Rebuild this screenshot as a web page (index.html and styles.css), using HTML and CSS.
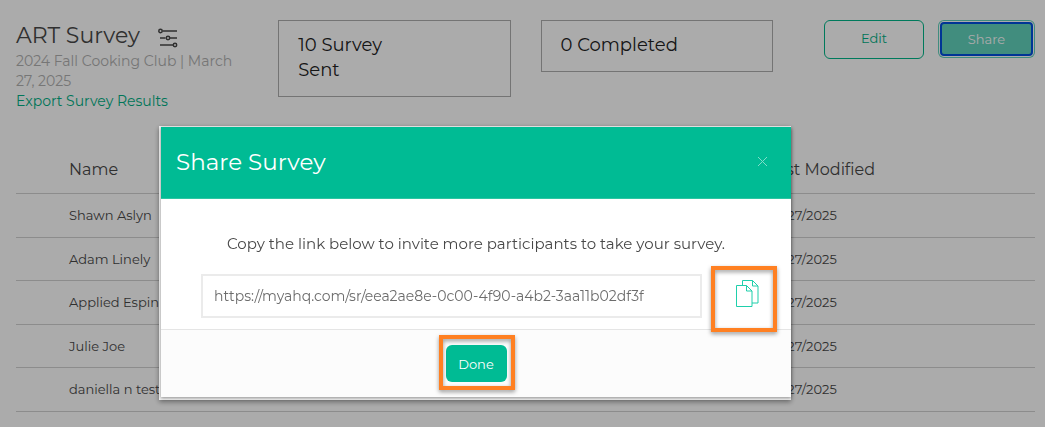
FILE: index.html
```html
<!DOCTYPE html>
<html lang="en">
<head>
    <meta charset="utf-8">
    <meta name="viewport" content="width=device-width, initial-scale=1">
    <title>ART Survey</title>
    <link rel="stylesheet" href="styles.css">
</head>
<body>
    <main class="page">
        <div class="survey-head">
            <div class="survey-info">
                <h1>ART Survey
                    <svg class="icon-sliders" width="20" height="20" viewBox="0 0 20 20" fill="none" stroke="currentColor" stroke-width="1.500">
                        <path d="M4.500 3H19M2 10h5.500M12 10h7M2 17h13"/>
                        <circle cx="2.500" cy="3" r="1.700"/>
                        <circle cx="10" cy="10" r="1.700"/>
                        <circle cx="17" cy="17" r="1.700"/>
                    </svg>
                </h1>
                <p class="survey-meta">2024 Fall Cooking Club | March 27, 2025</p>
                <a href="#" class="export">Export Survey Results</a>
            </div>
            <div class="stat">10 Survey<br>Sent</div>
            <div class="stat">0 Completed</div>
            <div class="actions">
                <button type="button" class="btn btn-outline">Edit</button>
                <button type="button" class="btn btn-share">Share</button>
            </div>
        </div>

        <table class="people">
            <thead>
                <tr><th>Name</th><th>Last Modified</th></tr>
            </thead>
            <tbody>
                <tr><td>Shawn Aslyn</td><td>03/27/2025</td></tr>
                <tr><td>Adam Linely</td><td>03/27/2025</td></tr>
                <tr><td>Applied Espinoza</td><td>03/27/2025</td></tr>
                <tr><td>Julie Joe</td><td>03/27/2025</td></tr>
                <tr><td>daniella n test</td><td>03/27/2025</td></tr>
            </tbody>
        </table>
    </main>

    <div class="overlay">
        <div class="frame">
            <div class="modal" role="dialog" aria-labelledby="modal-title">
                <div class="modal-header">
                    <h2 id="modal-title">Share Survey</h2>
                    <button type="button" class="close" aria-label="Close">
                        <svg width="11" height="11" viewBox="0 0 11 11" fill="none" stroke="currentColor"><path d="M1 1l9 9M10 1l-9 9"/></svg>
                    </button>
                </div>
                <div class="modal-body">
                    <label for="link">Copy the link below to invite more participants to take your survey.</label>
                    <div class="link-row">
                        <input type="text" id="link" value="https://myahq.com/sr/eea2ae8e-0c00-4f90-a4b2-3aa11b02df3f" readonly>
                        <button type="button" class="copy marked" aria-label="Copy link">
                            <svg width="23" height="27" viewBox="0 0 23 27" fill="none" stroke="currentColor">
                                <path d="M6.5 5V.5h10l5.5 5.500v17h-6M16.500.5V6H22"/>
                                <path d="M.5 5.500h10l5.500 5.500v15.500H.5zM10.500 5.500V11H16"/>
                            </svg>
                        </button>
                    </div>
                </div>
                <div class="modal-footer">
                    <button type="button" class="btn-done marked">Done</button>
                </div>
            </div>
        </div>
    </div>
</body>
</html>
```

FILE: styles.css
```css
* { margin: 0; padding: 0; box-sizing: border-box; }
body { font-family: Montserrat, Inter, sans-serif; font-size: 14px; color: #484848; background: #fff; }
button, input { font-family: inherit; }
button { cursor: pointer; }

.page { padding: 20px 10px 0 16px; }
.survey-head { display: grid; grid-template-columns: repeat(4, 1fr); column-gap: 30px; align-items: start; height: 124px; }
h1 { display: flex; align-items: center; gap: 18px; font-size: 22px; font-weight: 400; line-height: 31px; }
.icon-sliders { margin-top: 4px; }
.survey-meta { color: #b0b0b0; line-height: 20px; }
.export { display: block; color: #00b085; line-height: 20px; text-decoration: none; }
.stat { padding: 12px 19px 13px; border: 1px solid #aeaeae; font-size: 18px; line-height: 25px; color: #222; }
.actions { display: flex; justify-content: flex-end; gap: 16px; }
.btn { font-size: 13px; border-radius: 6px; }
.btn-outline { width: 100px; height: 39px; padding-bottom: 3px; border: 1px solid #00b789; background: none; color: #00b085; }
.btn-share { width: 93px; height: 34px; margin: 2px 2px 0 0; border: 2px solid #004fde; border-radius: 4px; background: #61d2bc; color: #fff; box-shadow: 0 0 0 1px #fff, 0 0 0 2px #61d2bc; }

.people { width: 100%; border-collapse: collapse; table-layout: fixed; }
.people th, .people td { height: 44px; padding-left: 53px; text-align: left; border-bottom: 1px solid #d1d1d1; font-weight: 400; }
.people th { height: 49px; padding-top: 2px; font-size: 16px; width: 69%; }
.people th + th { width: 31%; }
.people th + th, .people td + td { padding-left: 48px; }
.people td { font-size: 13px; }
.people tr:nth-child(even) td { height: 43px; }

.overlay { position: fixed; inset: 0; display: flex; align-items: flex-start; padding: 126px 254px 0 159px; background: rgba(0, 0, 0, .33); }
.frame { flex: 1; padding: 1px 0 3px 2px; background: #eee; box-shadow: 0 2px 5px rgba(0, 0, 0, .4); }
.modal { background: #fff; box-shadow: 0 1px 3px rgba(0, 0, 0, .4); }
.modal-header { display: flex; align-items: center; justify-content: space-between; height: 72px; padding: 0 23px 2px 15px; background: #00bb94; border-bottom: 1px solid #2cc5a2; color: #fff; }
.modal-header h2 { font-size: 23px; font-weight: 400; }
.close { display: flex; border: 0; background: none; color: #7fddc9; }
.modal-body { padding: 33px 14px 11px 40px; }
.modal-body label { display: block; margin: 0 0 18px -26px; line-height: 24px; font-size: 15px; text-align: center; }
.link-row { display: flex; gap: 9px; }
.link-row input { flex: 1; min-width: 0; height: 44px; padding: 0 11px; border: 2px solid #ebebeb; font-size: 14px; color: #6c6c6c; outline: 0; }
.copy { display: flex; align-items: center; justify-content: center; width: 66px; padding: 0 0 6px 6px; border: 0; background: none; color: #1fcfab; }
.modal-footer { display: flex; justify-content: center; padding: 15px 0; background: #fcfcfc; border-top: 1px solid #e5e5e5; }
.btn-done { width: 61px; height: 37px; border: 0; border-radius: 6px; background: #00bb94; color: #fff; font-size: 13px; }

/* orange highlight boxes */
.marked { position: relative; }
.marked::after { content: ""; position: absolute; inset: -10px -8px -8px -7px; border: 4px solid #ff8022; filter: drop-shadow(0 2px 2px rgba(0, 0, 0, .4)); }
.copy.marked::after { inset: -8px 0 -14px 0; }
```
